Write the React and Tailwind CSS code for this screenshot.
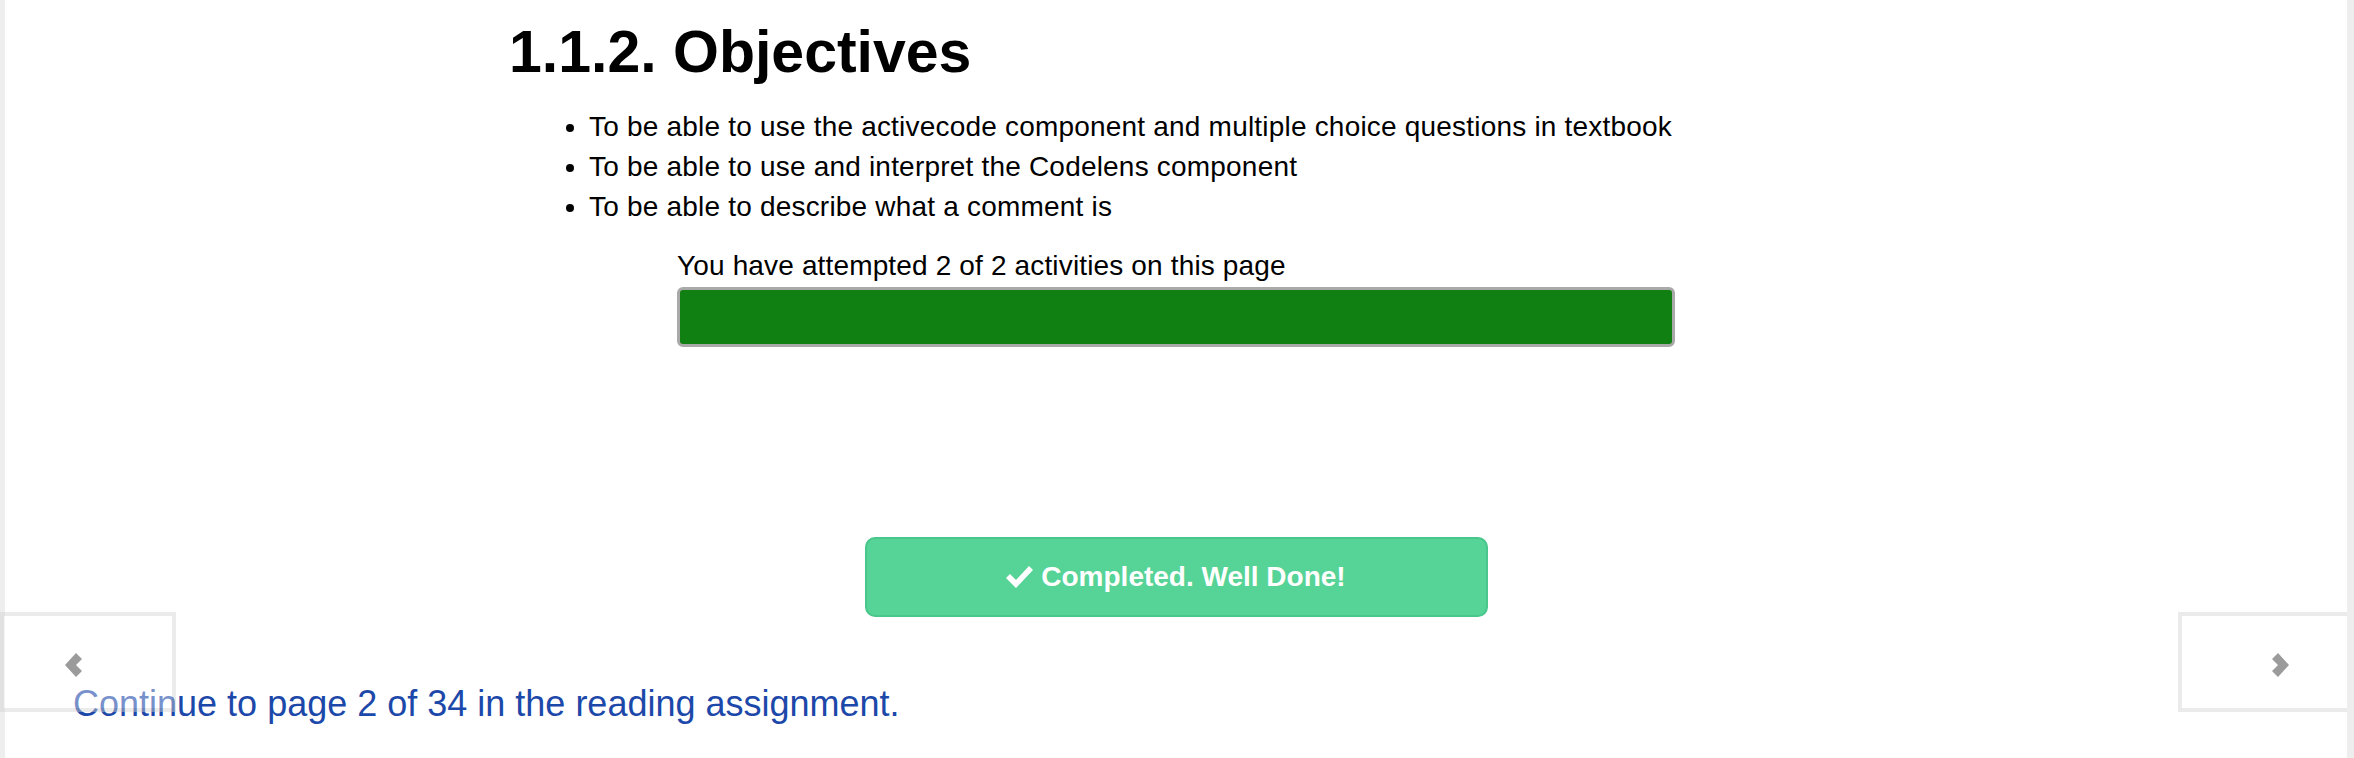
const FONT = { fontFamily: '"Liberation Sans", Arial, Helvetica, sans-serif' };

function Chevron({ dir }) {
  const pts =
    dir === "left"
      ? "11,0 17,6 11,12 17,18 11,24 0,12"
      : "6,0 17,12 6,24 0,18 6,12 0,6";
  return (
    <svg width="17" height="24" viewBox="0 0 17 24" className="block">
      <polygon points={pts} fill="#9b9b9b" />
    </svg>
  );
}

function CheckIcon() {
  return (
    <svg width="27" height="24" viewBox="0 0 27 24" className="block">
      <polygon points="0,13 4,9 10,15 23,1 27,5 10,23" fill="#ffffff" />
    </svg>
  );
}

export default function App() {
  return (
    <div
      className="relative flex h-[758px] w-full overflow-hidden bg-white text-black"
      style={FONT}
    >
      <div className="w-[5px] shrink-0 bg-[#eeeeee]" />
      <main className="flex-1 bg-white">
        <div className="mx-auto w-[1334px]">
          <h2 className="mt-[19px] text-[59px] font-bold leading-[66px]">
            1.1.2. Objectives
          </h2>
          <ul className="mt-[22px] list-disc pl-[80px] text-[28px] leading-[40px] tracking-[0.2px]">
            <li>
              To be able to use the activecode component and multiple choice
              questions in textbook
            </li>
            <li>To be able to use and interpret the Codelens component</li>
            <li>To be able to describe what a comment is</li>
          </ul>
        </div>

        <div className="mx-auto mt-[19px] w-[998px]">
          <p className="text-[28px] leading-[40px] tracking-[0.15px]">
            You have attempted 2 of 2 activities on this page
          </p>
          <div className="mt-[1px] h-[60px] rounded-[6px] border-[3px] border-[#a9a9a9] bg-[#108012]" />
        </div>

        <div className="mx-auto mt-[190px] flex h-[80px] w-[623px] items-center justify-center gap-[8px] rounded-[10px] border-2 border-[#48c68b] bg-[#56d396] text-[28px] font-bold text-white">
          <CheckIcon />
          <span>Completed. Well Done!</span>
        </div>

        <p className="mt-[61px] pl-[68px] text-[36px] leading-[51px] text-[#1c48a9]">
          Continue to page 2 of 34 in the reading assignment.
        </p>
      </main>
      <div className="w-[7px] shrink-0 bg-[#eeeeee]" />

      <div className="absolute left-0 top-[612px] h-[100px] w-[176px] border-4 border-black/[0.08] bg-white/40">
        <div className="absolute left-[61px] top-[37px]">
          <Chevron dir="left" />
        </div>
      </div>
      <div className="absolute right-0 top-[612px] h-[100px] w-[176px] border-4 border-r-0 border-black/[0.08] bg-white/40">
        <div className="absolute left-[90px] top-[37px]">
          <Chevron dir="right" />
        </div>
      </div>
      <div className="absolute right-0 top-0 h-full w-[7px] bg-[#eeeeee]" />
    </div>
  );
}
